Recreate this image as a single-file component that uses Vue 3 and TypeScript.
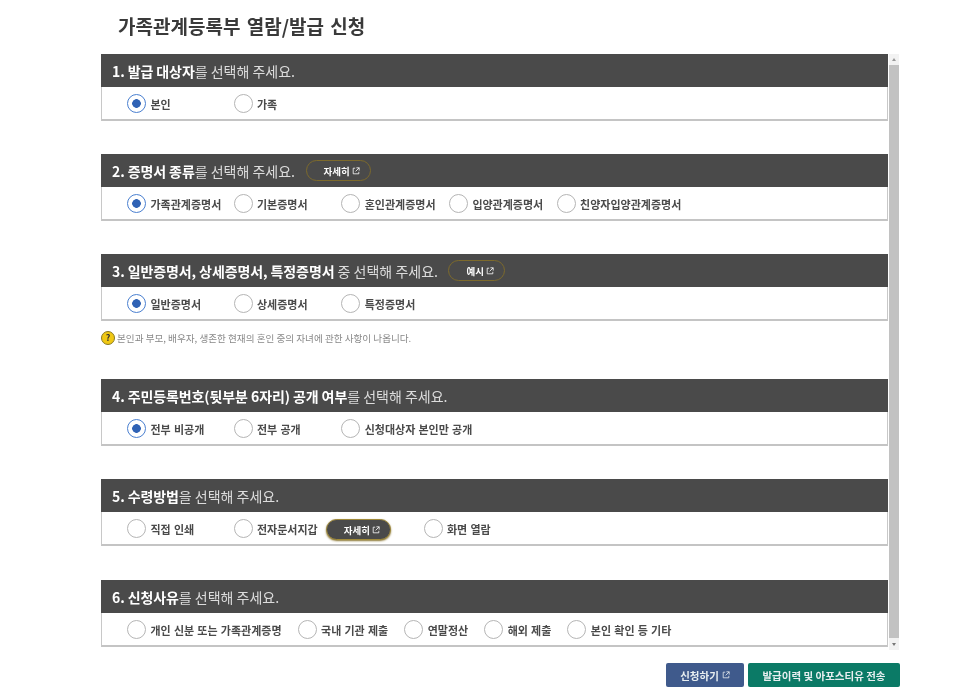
<script setup lang="ts">
interface Opt { label: string; checked?: boolean; more?: boolean }
interface Sec {
  num: string; strong: string; rest: string; btn?: string; tight?: boolean; note?: string; opts: Opt[]
}
const sections: Sec[] = [
  { num: '1.', strong: '발급 대상자', rest: '를 선택해 주세요.', opts: [{ label: '본인', checked: true }, { label: '가족' }] },
  { num: '2.', strong: '증명서 종류', rest: '를 선택해 주세요.', btn: '자세히', opts: [
    { label: '가족관계증명서', checked: true }, { label: '기본증명서' }, { label: '혼인관계증명서' }, { label: '입양관계증명서' }, { label: '친양자입양관계증명서' } ] },
  { num: '3.', strong: '일반증명서, 상세증명서, 특정증명서', rest: ' 중 선택해 주세요.', btn: '예시',
    note: '본인과 부모, 배우자, 생존한 현재의 혼인 중의 자녀에 관한 사항이 나옵니다.', opts: [
    { label: '일반증명서', checked: true }, { label: '상세증명서' }, { label: '특정증명서' } ] },
  { num: '4.', strong: '주민등록번호(뒷부분 6자리) 공개 여부', rest: '를 선택해 주세요.', opts: [
    { label: '전부 비공개', checked: true }, { label: '전부 공개' }, { label: '신청대상자 본인만 공개' } ] },
  { num: '5.', strong: '수령방법', rest: '을 선택해 주세요.', opts: [
    { label: '직접 인쇄' }, { label: '전자문서지갑', more: true }, { label: '화면 열람' } ] },
  { num: '6.', strong: '신청사유', rest: '를 선택해 주세요.', tight: true, opts: [
    { label: '개인 신분 또는 가족관계증명' }, { label: '국내 기관 제출' }, { label: '연말정산' }, { label: '해외 제출' }, { label: '본인 확인 등 기타' } ] },
]
</script>

<template>
  <div class="page">
    <h1 class="title">가족관계등록부 열람/발급 신청</h1>
    <div class="scroller">
      <div class="list">
        <section v-for="s in sections" :key="s.num" class="block">
          <div class="card">
            <div class="head">
              <span class="head-text"><b>{{ s.num }} {{ s.strong }}</b>{{ s.rest }}</span>
              <button v-if="s.btn" class="pill" type="button">
                {{ s.btn }}
                <svg class="ext" viewBox="0 0 10 10"><path d="M4 1.500H1.500v7h7V6M5.500 1H9v3.500M9 1 4.500 5.500" fill="none" stroke="currentColor" stroke-width="1" /></svg>
              </button>
            </div>
            <div class="body" :class="{ tight: s.tight }">
              <label v-for="o in s.opts" :key="o.label" class="opt">
                <span class="radio" :class="{ on: o.checked }"></span>
                <span class="lbl">{{ o.label }}</span>
                <button v-if="o.more" class="pill solid" type="button">
                  자세히
                  <svg class="ext" viewBox="0 0 10 10"><path d="M4 1.500H1.500v7h7V6M5.500 1H9v3.500M9 1 4.500 5.500" fill="none" stroke="currentColor" stroke-width="1" /></svg>
                </button>
              </label>
            </div>
          </div>
          <p v-if="s.note" class="note"><span class="q">?</span>{{ s.note }}</p>
        </section>
      </div>
      <div class="scrollbar">
        <span class="arrow up"></span>
        <span class="thumb"></span>
        <span class="arrow down"></span>
      </div>
    </div>
    <div class="actions">
      <button class="act blue" type="button">
        신청하기
        <svg class="ext" viewBox="0 0 10 10"><path d="M4 1.500H1.500v7h7V6M5.500 1H9v3.500M9 1 4.500 5.500" fill="none" stroke="currentColor" stroke-width="1" /></svg>
      </button>
      <button class="act green" type="button">발급이력 및 아포스티유 전송</button>
    </div>
  </div>
</template>

<style scoped>
.page {
  width: 965px;
  height: 695px;
  box-sizing: border-box;
  padding: 12px 65px 0 101px;
  background: #fff;
  font-family: "Noto Sans CJK KR", "Noto Sans", sans-serif;
  color: #333;
  filter: blur(0.6px);
  overflow: hidden;
}
.title {
  margin: 0 0 0 17px;
  height: 27px;
  font-size: 19px;
  line-height: 27px;
  font-weight: 700;
  word-spacing: 2px;
  color: #3a3a3a;
}
.scroller {
  margin-top: 15px;
  display: flex;
  height: 596px;
}
.list {
  width: 787px;
  flex: none;
}
.block {
  margin-bottom: 33px;
}
.block:nth-child(5) {
  margin-bottom: 34px;
}
.card {
  height: 67px;
  box-sizing: border-box;
  border: 1px solid #c8c8c8;
  border-top: 0;
  border-bottom: 2px solid #c4c4c4;
  background: #fff;
}
.head {
  height: 33px;
  margin: 0 -1px;
  padding-left: 11px;
  background: #4a4a4a;
  display: flex;
  align-items: center;
  gap: 10.500px;
  color: #dcdcdc;
  font-size: 14px;
  white-space: nowrap;
}
.head b {
  color: #fff;
  font-weight: 700;
  letter-spacing: -0.100px;
}
.body {
  height: 33px;
  display: flex;
  align-items: center;
  padding-left: 25px;
}
.opt {
  display: flex;
  align-items: center;
  width: 107.700px;
  flex: none;
  white-space: nowrap;
}
.opt:first-child {
  width: 106.500px;
}
.opt:has(.solid) {
  width: 190px;
}
.body.tight .opt {
  width: auto;
  margin-right: 16px;
}
.radio {
  width: 19px;
  height: 19px;
  flex: none;
  box-sizing: border-box;
  border: 1.500px solid #b5b5b5;
  border-radius: 50%;
  margin-right: 4.500px;
  background: #fff;
}
.radio.on {
  border-color: #4a7fd0;
  background: radial-gradient(circle, #2f62b5 0 4px, #fff 4.600px);
}
.lbl {
  font-size: 11px;
  font-weight: 700;
  word-spacing: 0.700px;
  color: #4a4a4a;
}
.pill {
  height: 21px;
  box-sizing: border-box;
  padding: 0 10px 0 17px;
  border: 1px solid #7d6a2c;
  border-radius: 11px;
  background: #4a4a4a;
  color: #fff;
  font-family: inherit;
  font-size: 9.500px;
  font-weight: 700;
  display: inline-flex;
  align-items: center;
  gap: 2px;
}
.pill.solid {
  margin-left: 8px;
  margin-top: 2px;
  border: 1px solid #a08a3a;
  box-shadow: 0 1px 2px #8a7530;
}
.ext {
  width: 8px;
  height: 8px;
  flex: none;
}
.note {
  margin: 8px 0 0;
  height: 17px;
  display: flex;
  align-items: center;
  font-size: 9.600px;
  color: #888;
  white-space: nowrap;
}
.q {
  width: 14px;
  height: 14px;
  margin-right: 2px;
  border-radius: 50%;
  background: #f0c814;
  border: 1px solid #8a7a20;
  box-sizing: border-box;
  color: #333;
  font-size: 9px;
  font-weight: 700;
  line-height: 12px;
  text-align: center;
}
.scrollbar {
  width: 10px;
  margin-left: 1px;
  flex: none;
  background: #f2f2f2;
  display: flex;
  flex-direction: column;
  align-items: center;
}
.thumb {
  flex: 1;
  width: 100%;
  background: #c2c2c2;
}
.arrow {
  width: 0;
  flex: none;
  border-left: 2.500px solid transparent;
  border-right: 2.500px solid transparent;
  box-sizing: border-box;
}
.arrow.up {
  border-bottom: 3px solid #999;
  height: 3px;
  margin: 4px 0 4px;
}
.arrow.down {
  border-top: 3px solid #777;
  height: 3px;
  margin: 5px 0 4px;
}
.actions {
  display: flex;
  justify-content: flex-end;
  gap: 4px;
  margin-top: 13px;
}
.act {
  height: 24px;
  border: 0;
  border-radius: 2px;
  color: #e8eef0;
  font-family: inherit;
  font-size: 10.500px;
  font-weight: 700;
  display: inline-flex;
  align-items: center;
  justify-content: center;
  gap: 3px;
  padding: 0;
}
.blue {
  width: 78px;
  background: #3f5a8c;
}
.green {
  width: 152px;
  background: #0b7a66;
}
</style>
